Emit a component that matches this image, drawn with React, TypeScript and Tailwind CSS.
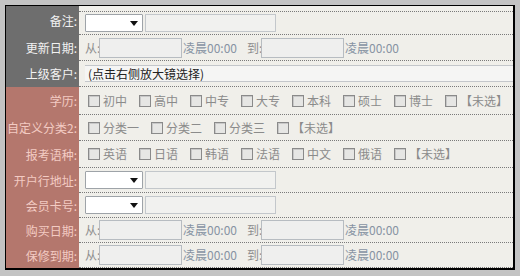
import type { ReactNode } from 'react';

const font = { fontFamily: '"Noto Sans CJK SC", "Noto Sans", sans-serif' };

function Label({ text, red }: { text: string; red?: boolean }) {
  return (
    <div
      className={`w-[73px] shrink-0 flex items-center justify-end pr-[2px] text-[12px] whitespace-nowrap ${
        red ? 'bg-[#b4776d] text-[#f3cbc3]' : 'bg-[#6e6e6e] text-[#f2f2f2]'
      }`}
    >
      {text}
    </div>
  );
}

function Row({ label, red, h, first, children }: { label: string; red?: boolean; h: string; first?: boolean; children: ReactNode }) {
  return (
    <div className={`flex ${h}`}>
      <Label text={label} red={red} />
      <div className={`flex-1 min-w-0 flex flex-col ${first ? 'pt-[5px]' : ''}`}>
        <div
          className={`flex-1 flex items-center pl-[6px] border-b border-dotted border-[#7a7a7a] overflow-hidden ${
            first ? 'border-t' : ''
          }`}
        >
          {children}
        </div>
      </div>
    </div>
  );
}

function Select() {
  return (
    <div className="w-[58px] h-[18px] shrink-0 bg-white border border-[#9ea3a8] rounded-[1px] flex items-center justify-end pr-[4px]">
      <svg width="8" height="5" viewBox="0 0 8 5">
        <path d="M0 0 H8 L4 5 Z" fill="#111" />
      </svg>
    </div>
  );
}

function TextBox({ w }: { w: string }) {
  return <div className={`${w} h-[18px] bg-[#f1f1ef] border border-[#c3c7cb]`} />;
}

function DateRange() {
  return (
    <div className="flex items-center text-[12px] whitespace-nowrap">
      <span className="text-[#8e8e8e] w-[14px]">从:</span>
      <div className="w-[83px] h-[20px] bg-[#efefee] border border-[#b7bcc1]" />
      <span className="text-[#8793a3] ml-[1px]">凌晨00:00</span>
      <span className="text-[#8e8e8e] ml-[10px] w-[14px]">到:</span>
      <div className="w-[83px] h-[20px] bg-[#efefee] border border-[#b7bcc1]" />
      <span className="text-[#8793a3] ml-[1px]">凌晨00:00</span>
    </div>
  );
}

function Checks({ items }: { items: string[] }) {
  return (
    <div className="flex items-center text-[12px] text-[#8b8b8b] whitespace-nowrap">
      {items.map((it) => (
        <label key={it} className="flex shrink-0 items-center ml-[3px] mr-[9px]">
          <span className="w-[12px] h-[12px] shrink-0 border border-[#8a8a8a] bg-[#e6e6e4] shadow-[inset_1px_1px_0_#c8c8c8]" />
          <span className="ml-[3px]">{it}</span>
        </label>
      ))}
    </div>
  );
}

export default function App() {
  return (
    <div className="w-[520px] h-[276px] bg-[#c3c3c3] pt-[5px] pl-[5px]" style={font}>
      <div className="w-[510px] border-l border-t border-r-2 border-b-2 border-black bg-[#f0efea] flex flex-col">
        <Row label="备注:" h="h-[29px]" first>
          <Select />
          <div className="ml-[2px]">
            <TextBox w="w-[131px]" />
          </div>
        </Row>
        <Row label="更新日期:" h="h-[26px]">
          <DateRange />
        </Row>
        <Row label="上级客户:" h="h-[26px]">
          <div className="flex-1 h-[17px] bg-[#f5f5f4] border-t border-b border-[#c4c7cb] flex items-center pl-[3px] text-[12px] text-[#222]">
            (点击右侧放大镜选择)
          </div>
        </Row>
        <Row label="学历:" red h="h-[28px]">
          <Checks items={['初中', '高中', '中专', '大专', '本科', '硕士', '博士', '【未选】']} />
        </Row>
        <Row label="自定义分类2:" red h="h-[26px]">
          <Checks items={['分类一', '分类二', '分类三', '【未选】']} />
        </Row>
        <Row label="报考语种:" red h="h-[27px]">
          <Checks items={['英语', '日语', '韩语', '法语', '中文', '俄语', '【未选】']} />
        </Row>
        <Row label="开户行地址:" red h="h-[25px]">
          <Select />
          <div className="ml-[2px]">
            <TextBox w="w-[131px]" />
          </div>
        </Row>
        <Row label="会员卡号:" red h="h-[25px]">
          <Select />
          <div className="ml-[2px]">
            <TextBox w="w-[131px]" />
          </div>
        </Row>
        <Row label="购买日期:" red h="h-[25px]">
          <DateRange />
        </Row>
        <Row label="保修到期:" red h="h-[25px]">
          <DateRange />
        </Row>
      </div>
    </div>
  );
}
